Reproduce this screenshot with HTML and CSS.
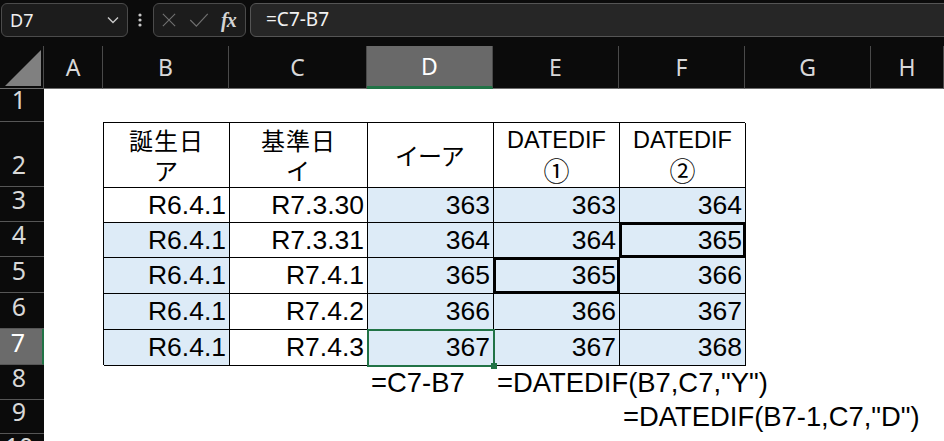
FILE: index.html
```html
<!DOCTYPE html>
<html lang="ja">
<head>
    <meta charset="UTF-8">
    <meta name="viewport" content="width=device-width, initial-scale=1.0">
    <title>DATEDIF</title>
    <link rel="stylesheet" href="styles.css">
</head>
<body>
    <!-- name box + formula bar -->
    <div class="ribbon">
        <div class="namebox">
            <span>D7</span>
            <svg class="chev" viewBox="0 0 12 8"><path d="M1 1.5l5 5 5-5"/></svg>
        </div>
        <svg class="grip" viewBox="0 0 4 14"><circle cx="2" cy="2" r="1.6"/><circle cx="2" cy="7" r="1.6"/><circle cx="2" cy="12" r="1.6"/></svg>
        <div class="fxbox">
            <svg class="cancel" viewBox="0 0 16 16"><path d="M1 1l14 14M15 1L1 15"/></svg>
            <svg class="enter" viewBox="0 0 22 16"><path d="M1 8l7 7L21 1"/></svg>
            <span class="fx">fx</span>
        </div>
        <div class="formula">=C7-B7</div>
    </div>

    <div class="sheet">
        <div class="corner"><svg viewBox="0 0 44 43"><polygon points="5,40 41,40 41,4"/></svg></div>
        <div class="colhead">A</div>
        <div class="colhead">B</div>
        <div class="colhead">C</div>
        <div class="colhead sel">D</div>
        <div class="colhead">E</div>
        <div class="colhead">F</div>
        <div class="colhead">G</div>
        <div class="colhead">H</div>

        <div class="rowhead r1">1</div>
        <div class="rowhead r2">2</div>
        <div class="rowhead r3">3</div>
        <div class="rowhead r4">4</div>
        <div class="rowhead r5">5</div>
        <div class="rowhead r6">6</div>
        <div class="rowhead r7 sel">7</div>
        <div class="rowhead r8">8</div>
        <div class="rowhead r9">9</div>
        <div class="rowhead r10">10</div>

        <div class="tbl">
            <div class="c hd jp"><span>誕生日</span><span>ア</span></div>
            <div class="c hd jp"><span>基準日</span><span>イ</span></div>
            <div class="c hd jp kana">イーア</div>
            <div class="c hd"><span class="small">DATEDIF</span><span class="circ">①</span></div>
            <div class="c hd"><span class="small">DATEDIF</span><span class="circ">②</span></div>

            <div class="c">R6.4.1</div>
            <div class="c">R7.3.30</div>
            <div class="c blue">363</div>
            <div class="c blue">363</div>
            <div class="c blue">364</div>

            <div class="c blue">R6.4.1</div>
            <div class="c">R7.3.31</div>
            <div class="c blue">364</div>
            <div class="c blue">364</div>
            <div class="c blue boxed">365</div>

            <div class="c blue">R6.4.1</div>
            <div class="c">R7.4.1</div>
            <div class="c blue">365</div>
            <div class="c blue boxed">365</div>
            <div class="c blue">366</div>

            <div class="c blue">R6.4.1</div>
            <div class="c">R7.4.2</div>
            <div class="c blue">366</div>
            <div class="c blue">366</div>
            <div class="c blue">367</div>

            <div class="c blue">R6.4.1</div>
            <div class="c">R7.4.3</div>
            <div class="c blue active">367</div>
            <div class="c blue">367</div>
            <div class="c blue">368</div>
        </div>

        <div class="note n-d">=C7-B7</div>
        <div class="note n-e">=DATEDIF(B7,C7,"Y")</div>
        <div class="note n-f">=DATEDIF(B7-1,C7,"D")</div>
    </div>
</body>
</html>
```

FILE: styles.css
```css
body {
    margin: 0;
    background-color: #0b0b0b;
    font-family: "Noto Sans", sans-serif;
    overflow: hidden;
}

/* top bar */
.ribbon {
    display: flex;
    align-items: flex-start;
    height: 46px;
    padding-top: 3px;
    box-sizing: border-box;
    background-color: #0b0b0b;
}
.namebox {
    display: flex;
    align-items: center;
    justify-content: space-between;
    width: 127px;
    height: 34px;
    margin-left: 1px;
    padding: 0 8px 0 8px;
    box-sizing: border-box;
    border: 1px solid #4b4b4b;
    border-radius: 6px;
    background-color: #1c1c1c;
    color: #eee;
    font-size: 18px;
}
.chev {
    width: 12px;
    height: 8px;
    fill: none;
    stroke: #c8c8c8;
    stroke-width: 1.4;
}
.grip {
    width: 4px;
    height: 14px;
    margin: 10px 11px 0 10px;
    fill: #c8c8c8;
}
.fxbox {
    display: flex;
    align-items: center;
    width: 93px;
    height: 34px;
    padding-left: 8px;
    box-sizing: border-box;
    border: 1px solid #4b4b4b;
    border-radius: 6px;
    background-color: #1c1c1c;
    margin-right: 4px;
}
.cancel {
    width: 14px;
    height: 14px;
    fill: none;
    stroke: #707070;
    stroke-width: 1.3;
}
.enter {
    width: 20px;
    height: 14px;
    margin-left: 13px;
    fill: none;
    stroke: #707070;
    stroke-width: 1.3;
}
.fx {
    margin-left: 12px;
    color: #d4d4d4;
    font-family: "Liberation Serif", serif;
    font-style: italic;
    font-weight: bold;
    font-size: 20px;
    letter-spacing: -1px;
}
.formula {
    flex: 1;
    height: 34px;
    margin-right: -10px;
    padding-left: 15px;
    box-sizing: border-box;
    border: 1px solid #555;
    border-radius: 6px;
    background-color: #262626;
    color: #f2f2f2;
    font-size: 19px;
    line-height: 31px;
}

/* worksheet: col 1 = row numbers, cols 2..9 = A..H */
.sheet {
    display: grid;
    grid-template-columns: 44px 59px 126px 138px 126px 126px 126px 126px 1fr;
    grid-template-rows: 43px 33px 65px 35px 35px 36px 36px 36px 35px 34px 35px;
    height: 395px;
    overflow: hidden;
    background-color: #fff;
}
.corner {
    background-color: #0b0b0b;
    border-bottom: 1px solid #6e6e6e;
    border-right: 1px solid #4a4a4a;
    box-sizing: border-box;
}
.corner svg {
    display: block;
    width: 44px;
    height: 43px;
    fill: #808080;
}
.colhead {
    display: flex;
    align-items: center;
    justify-content: center;
    background-color: #0b0b0b;
    border-right: 1px solid #4a4a4a;
    border-bottom: 1px solid #6e6e6e;
    color: #d8d8d8;
    font-size: 23px;
}
.colhead.sel {
    background-color: #696969;
    color: #fff;
    border-bottom: 3px solid #217346;
}
.rowhead {
    grid-column: 1;
    display: flex;
    align-items: flex-end;
    justify-content: center;
    padding: 0 6px 9px 0;
    background-color: #0b0b0b;
    border-bottom: 1px solid #565656;
    color: #d8d8d8;
    font-size: 25px;
    line-height: 1;
}
.rowhead.sel {
    background-color: #6b6b6b;
    color: #fff;
    border-right: 2px solid #217346;
}
.r1 { grid-row: 2; }
.r2 { grid-row: 3; }
.r3 { grid-row: 4; }
.r4 { grid-row: 5; }
.r5 { grid-row: 6; }
.r6 { grid-row: 7; }
.r7 { grid-row: 8; }
.r8 { grid-row: 9; }
.r9 { grid-row: 10; }
.r10 { grid-row: 11; }

/* bordered table B2:F7 */
.tbl {
    grid-column: 3 / 8;
    grid-row: 3 / 9;
    display: grid;
    grid-template-columns: 126px 138px 126px 126px 126px;
    grid-template-rows: 65px 35px 35px 36px 36px 36px;
    border-left: 1px solid #000;
    border-top: 1px solid #000;
    font-family: "Liberation Sans", "Noto Sans CJK JP", sans-serif;
    color: #000;
}
.c {
    display: flex;
    align-items: center;
    justify-content: flex-end;
    padding-right: 3px;
    border-right: 1px solid #000;
    border-bottom: 1px solid #000;
    font-size: 26.5px;
    background-color: #fff;
}
.c.blue {
    background-color: #ddebf7;
}
.c.hd {
    flex-direction: column;
    justify-content: center;
    padding: 0;
    line-height: 30px;
}
.jp {
    font-family: "Noto Sans CJK JP", sans-serif;
    font-size: 24px;
    letter-spacing: 1px;
}
.kana {
    font-feature-settings: "palt";
    letter-spacing: 1px;
}
.small {
    font-size: 23.5px;
}
.circ {
    font-family: "Noto Sans CJK JP", sans-serif;
    font-size: 26px;
}
.c.boxed {
    box-shadow: inset 0 0 0 2px #000;
}
.c.active {
    position: relative;
    z-index: 1;
    outline: 2px solid #217346;
    outline-offset: -1px;
}
.c.active::after {
    content: "";
    position: absolute;
    right: -4px;
    bottom: -4px;
    width: 6px;
    height: 6px;
    background-color: #217346;
}

/* formulas typed under the table */
.note {
    align-self: center;
    padding-left: 4px;
    white-space: nowrap;
    font-family: "Liberation Sans", sans-serif;
    font-size: 27.4px;
    color: #000;
}
.n-d { grid-column: 5; grid-row: 9; }
.n-e { grid-column: 6; grid-row: 9; }
.n-f { grid-column: 7; grid-row: 10; }
```
